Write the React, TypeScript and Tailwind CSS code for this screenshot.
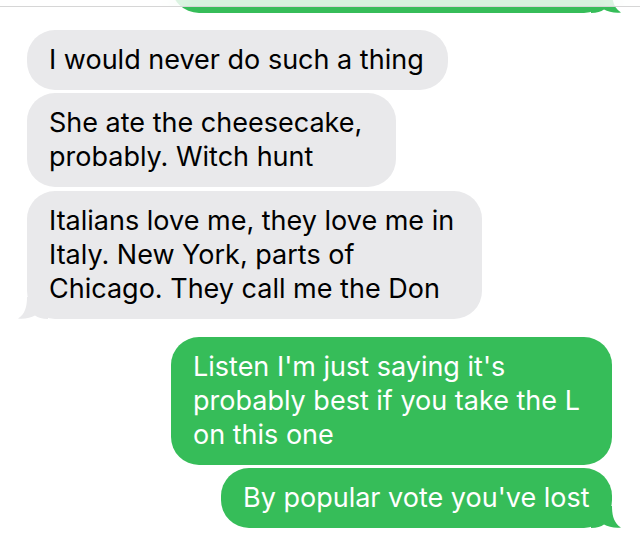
import React from "react";

const GRAY = "bg-[#e9e9eb]";
const GREEN = "bg-[#36bd59]";

function Tail({ side, fill }: { side: "left" | "right"; fill: string }) {
  return (
    <svg
      width="30"
      height="22"
      viewBox="0 0 30 22"
      className={
        side === "right"
          ? "absolute bottom-0 right-[-9px]"
          : "absolute bottom-0 left-[-9px] -scale-x-100"
      }
      aria-hidden
    >
      <path
        d="M0 0 H21 C21 10 23 17 30 21.6 C24 22.4 17 21 13 18.6 C10 21 6 22 0 22 Z"
        fill={fill}
      />
    </svg>
  );
}

function Bubble({
  lines,
  width,
  sent,
  tail,
  className = "",
}: {
  lines: string[];
  width: string;
  sent?: boolean;
  tail?: boolean;
  className?: string;
}) {
  return (
    <div
      className={`relative ${width} ${sent ? GREEN + " self-end text-white" : GRAY + " self-start text-black"} rounded-[28px] pl-[22px] py-[13px] ${className}`}
    >
      {lines.map((l, i) => (
        <div key={i} className="whitespace-nowrap leading-[34px]">
          {l}
        </div>
      ))}
      {tail && (
        <Tail side={sent ? "right" : "left"} fill={sent ? "#36bd59" : "#e9e9eb"} />
      )}
    </div>
  );
}

export default function App() {
  return (
    <div className="relative h-[550px] w-[640px] overflow-hidden bg-white font-['Inter',sans-serif] text-[27px]">
      <div className="flex flex-col pl-[27px] pr-[28px]">
        {/* previous sent message, mostly scrolled off */}
        <div className={`relative w-[441px] h-[60px] -mt-[47px] self-end rounded-[28px] ${GREEN}`}>
          <Tail side="right" fill="#36bd59" />
        </div>

        <Bubble className="mt-[17px]" width="w-[421px]" lines={["I would never do such a thing"]} />
        <Bubble
          className="mt-[3px]"
          width="w-[369px]"
          lines={["She ate the cheesecake,", "probably. Witch hunt"]}
        />
        <Bubble
          className="mt-[4px]"
          width="w-[455px]"
          tail
          lines={[
            "Italians love me, they love me in",
            "Italy. New York, parts of",
            "Chicago. They call me the Don",
          ]}
        />

        <Bubble
          className="mt-[18px]"
          width="w-[441px]"
          sent
          lines={[
            "Listen I'm just saying it's",
            "probably best if you take the L",
            "on this one",
          ]}
        />
        <Bubble
          className="mt-[3px]"
          width="w-[391px]"
          sent
          tail
          lines={["By popular vote you've lost"]}
        />
      </div>

      {/* translucent nav bar edge */}
      <div className="absolute inset-x-0 top-0 h-[7px] border-b border-[#d6d6d6] bg-white/80 backdrop-blur-md" />
    </div>
  );
}
